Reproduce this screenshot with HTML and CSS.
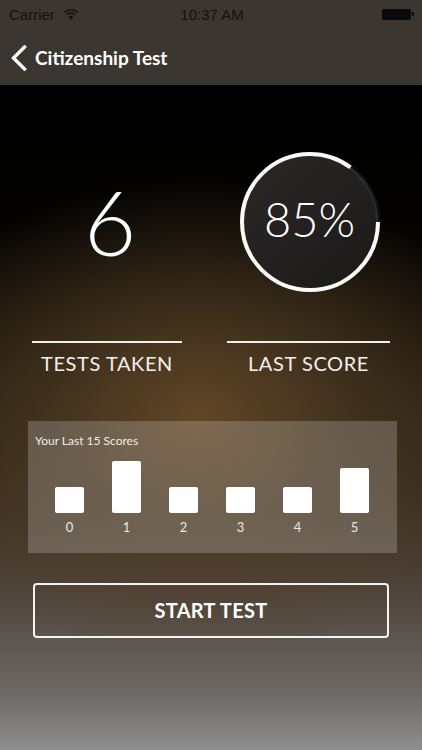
FILE: index.html
```html
<!DOCTYPE html>
<html lang="en">
<head>
<meta charset="utf-8">
<title>Citizenship Test</title>
<link rel="stylesheet" href="styles.css">
</head>
<body>
<div class="app">
  <header class="header">
    <div class="status">
      <div class="status-left">
        <span class="carrier">Carrier</span>
        <svg class="wifi" width="16" height="12" viewBox="0 0 16 12">
          <path d="M8 11.5 L5.6 8.9 A3.4 3.4 0 0 1 10.4 8.9 Z" fill="#111"/>
          <path d="M3.6 6.9 A6.2 6.2 0 0 1 12.4 6.9" fill="none" stroke="#111" stroke-width="1.6"/>
          <path d="M1.3 4.5 A9.4 9.4 0 0 1 14.7 4.5" fill="none" stroke="#111" stroke-width="1.6"/>
        </svg>
      </div>
      <span class="time">10:37 AM</span>
      <div class="status-right">
        <span class="battery"></span><span class="battery-nub"></span>
      </div>
    </div>
    <nav class="nav">
      <svg class="back" width="18" height="26" viewBox="0 0 18 26">
        <path d="M14.5 2 L3.5 13 L14.5 24" fill="none" stroke="#fff" stroke-width="3.4" stroke-linecap="square"/>
      </svg>
      <span class="nav-title">Citizenship Test</span>
    </nav>
  </header>

  <main class="screen">
    <section class="stats">
      <div class="stat">
        <div class="stat-top"><span class="big-num">6</span></div>
        <div class="rule"></div>
        <div class="stat-label">TESTS TAKEN</div>
      </div>
      <div class="stat">
        <div class="stat-top">
          <div class="ring">
            <svg width="140" height="140" viewBox="0 0 140 140">
              <defs>
                <linearGradient id="ringfill" x1="0" y1="0" x2="1" y2="1">
                  <stop offset="0" stop-color="#2b2826"/>
                  <stop offset="1" stop-color="#1b1918"/>
                </linearGradient>
              </defs>
              <circle cx="70" cy="70" r="68" fill="url(#ringfill)" stroke="rgba(255,255,255,0.07)" stroke-width="4"/>
              <circle cx="70" cy="70" r="68" fill="none" stroke="#fbf8f5" stroke-width="4" stroke-dasharray="363.2 500"/>
            </svg>
            <span class="ring-text">85%</span>
          </div>
        </div>
        <div class="rule"></div>
        <div class="stat-label">LAST SCORE</div>
      </div>
    </section>

    <section class="chart">
      <div class="chart-title">Your Last 15 Scores</div>
      <div class="bars">
        <div class="col"><div class="bar-area"><div class="bar" style="height:26px"></div></div><span class="bar-label">0</span></div>
        <div class="col"><div class="bar-area"><div class="bar" style="height:52px"></div></div><span class="bar-label">1</span></div>
        <div class="col"><div class="bar-area"><div class="bar" style="height:26px"></div></div><span class="bar-label">2</span></div>
        <div class="col"><div class="bar-area"><div class="bar" style="height:26px"></div></div><span class="bar-label">3</span></div>
        <div class="col"><div class="bar-area"><div class="bar" style="height:26px"></div></div><span class="bar-label">4</span></div>
        <div class="col"><div class="bar-area"><div class="bar" style="height:45px"></div></div><span class="bar-label">5</span></div>
      </div>
    </section>

    <button class="start-btn" type="button">START TEST</button>
  </main>
</div>
</body>
</html>
```

FILE: styles.css
```css
* {
  box-sizing: border-box;
}

html, body {
  margin: 0;
  padding: 0;
  background: #000;
}

body {
  width: 422px;
  height: 750px;
  overflow: hidden;
  font-family: "Lato", "Liberation Sans", sans-serif;
  color: #fff;
}

.app {
  width: 422px;
  height: 750px;
  display: flex;
  flex-direction: column;
}

/* Header */
.header {
  background: #3c3630;
  height: 85px;
  display: flex;
  flex-direction: column;
}

.status {
  height: 28px;
  display: grid;
  grid-template-columns: 1fr auto 1fr;
  align-items: center;
  padding: 0 8px 0 9px;
  font-family: "Liberation Sans", Arial, sans-serif;
  font-size: 15px;
  color: #111;
}

.status-left {
  display: flex;
  align-items: center;
  gap: 8px;
}

.wifi {
  display: block;
  margin-top: -1px;
}

.time {
  font-weight: 400;
  padding-left: 1px;
}

.status-right {
  display: flex;
  justify-content: flex-end;
  align-items: center;
}

.battery {
  display: block;
  width: 29px;
  height: 11px;
  background: #0a0a0a;
  border-radius: 2px;
}

.battery-nub {
  display: block;
  width: 2px;
  height: 4px;
  margin-left: 1px;
  background: #0a0a0a;
  border-radius: 0 1px 1px 0;
}

.nav {
  height: 57px;
  display: flex;
  align-items: center;
  padding-left: 10px;
  gap: 7px;
}

.back {
  display: block;
  margin-top: 2px;
}

.nav-title {
  font-family: "Lato", sans-serif;
  font-weight: 700;
  font-size: 19px;
  color: #fff;
  margin-top: 1px;
}

/* Main screen */
.screen {
  flex: 1;
  display: flex;
  flex-direction: column;
  background:
    radial-gradient(ellipse 320px 240px at 47% 330px, rgba(98, 72, 38, 0.95) 0%, rgba(84, 64, 38, 0.6) 45%, rgba(50, 40, 25, 0) 100%),
    linear-gradient(180deg, #000 0px, #040302 140px, #1c150c 270px, #3a2e22 420px, #524840 520px, #6e6a67 610px, #8f8f8f 665px);
}

.stats {
  display: grid;
  grid-template-columns: 150px 163px;
  column-gap: 45px;
  padding: 67px 32px 0 32px;
}

.stat {
  display: flex;
  flex-direction: column;
  align-items: center;
}

.stat-top {
  height: 140px;
  width: 100%;
  display: flex;
  align-items: center;
  justify-content: center;
}

.big-num {
  font-family: "Lato", sans-serif;
  font-weight: 300;
  font-size: 90px;
  line-height: 1;
  color: #fff;
  margin-top: -3px;
  margin-left: 6px;
}

.ring {
  position: relative;
  width: 140px;
  height: 140px;
  margin-left: 2px;
}

.ring svg {
  display: block;
}

.ring-text {
  position: absolute;
  inset: 0;
  display: flex;
  align-items: center;
  justify-content: center;
  font-family: "Lato", sans-serif;
  font-weight: 300;
  font-size: 47px;
  line-height: 1;
  color: #fff;
  padding-bottom: 6px;
}

.rule {
  width: 100%;
  height: 2px;
  background: #f2eeea;
  margin-top: 49px;
}

.stat-label {
  font-family: "Lato", sans-serif;
  font-weight: 400;
  font-size: 20px;
  line-height: 24px;
  margin-top: 8px;
  color: #f4f0ec;
  letter-spacing: 0.6px;
}

/* Chart */
.chart {
  margin: 46px 25px 0 28px;
  height: 132px;
  background: rgba(255, 255, 255, 0.2);
  padding: 13px 13px 0 13px;
}

.chart-title {
  font-size: 12px;
  line-height: 14px;
  color: #f1ede8;
  margin-left: -6px;
}

.bars {
  display: grid;
  grid-template-columns: repeat(6, 57px);
}

.col {
  display: flex;
  flex-direction: column;
  align-items: center;
}

.bar-area {
  height: 65px;
  display: flex;
  align-items: flex-end;
}

.bar {
  width: 29px;
  background: #fff;
  border-radius: 2px;
}

.bar-label {
  font-size: 13px;
  font-weight: 400;
  line-height: 14px;
  margin-top: 7px;
  color: #ece8e4;
}

/* Button */
.start-btn {
  margin: 30px 0 0 33px;
  width: 356px;
  height: 55px;
  background: transparent;
  border: 2px solid #f6f2ee;
  border-radius: 4px;
  color: #fff;
  font-family: "Lato", sans-serif;
  font-weight: 700;
  font-size: 20px;
  letter-spacing: 0.3px;
  padding: 0;
  padding-bottom: 2px;
  cursor: pointer;
}
```
